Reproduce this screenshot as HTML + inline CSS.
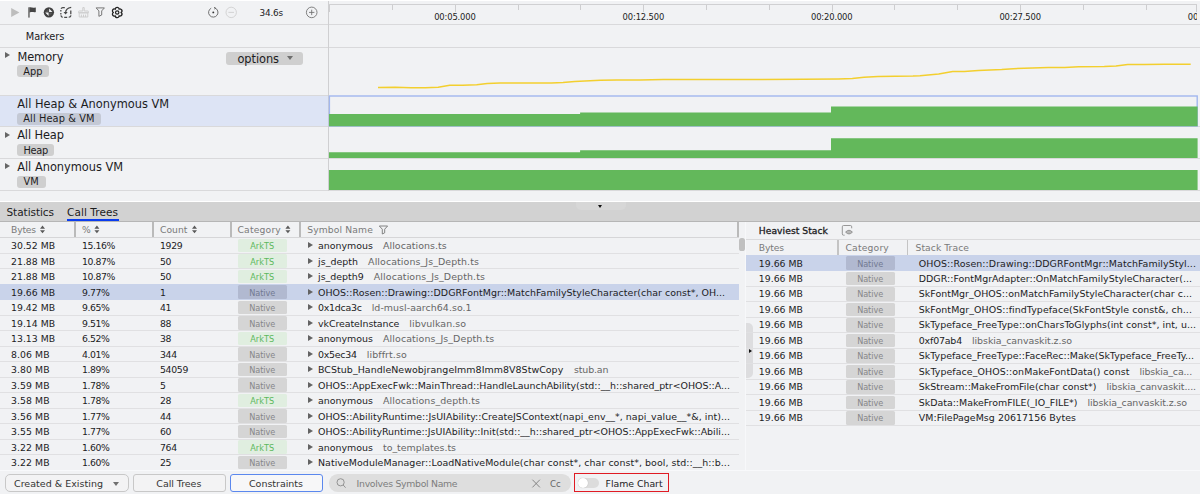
<!DOCTYPE html>
<html><head><meta charset="utf-8"><title>Profiler</title>
<style>
html,body{margin:0;padding:0}
body{width:1200px;height:494px;overflow:hidden;background:#f1f2f4;font-family:"DejaVu Sans","Liberation Sans",sans-serif;color:#1c1c1e;position:relative}
.a{position:absolute}
.t{position:absolute;white-space:pre;line-height:1}
.hl{position:absolute;height:1px;background:#d9d9db}
.vl{position:absolute;width:1px;background:#cfcfd1}
.badge{position:absolute;background:#cfcfcf;border-radius:3px;height:12px}
.arr{position:absolute;width:0;height:0;border-left:5.4px solid #666;border-top:3.6px solid transparent;border-bottom:3.6px solid transparent}
.row{position:absolute;left:0;width:738.5px;height:15.5px}
.cat{position:absolute;height:13.7px;border-radius:1.5px}
.ark{background:#e0eee0;color:#5cb85c}
.nat{background:#d5d5d5;color:#868689}
.g{color:#666}
.ta{position:absolute;left:307.5px;width:0;height:0;border-left:5.2px solid #636363;border-top:3.5px solid transparent;border-bottom:3.5px solid transparent}
.btn{position:absolute;box-sizing:border-box;border:1px solid #c8c8c8;border-radius:3px;background:#f3f3f4}
</style></head><body>

<div class="a" style="left:0;top:0;width:1200px;height:1.2px;background:#fff"></div>
<div class="hl" style="left:0;top:24px;width:1200px"></div>
<div class="hl" style="left:0;top:47px;width:1200px"></div>
<div class="a" style="left:0;top:95px;width:328px;height:31px;background:#dde4f5"></div>
<div class="hl" style="left:0;top:126px;width:1200px"></div>
<div class="hl" style="left:0;top:158px;width:1200px"></div>
<div class="hl" style="left:0;top:190px;width:1200px"></div>
<div class="hl" style="left:0;top:94.5px;width:328px"></div>
<div class="vl" style="left:328px;top:1px;height:190px"></div>
<svg class="a" style="left:0;top:0" width="328" height="25" viewBox="0 0 328 25">
<path d="M11.2 7.9 L19.4 12.4 L11.2 16.9 Z" fill="#bdbdbd"/>
<rect x="28" y="7.3" width="1.9" height="10.3" fill="#858585"/>
<path d="M29.5 7.3 C31 6.9 32.5 7.9 34 7.7 L35.8 7.4 L35.8 12 C34.4 12.6 32.5 11.8 31 12.1 L29.5 12.4 Z" fill="#454545"/>
<circle cx="48.9" cy="12.3" r="5.15" fill="#404040"/>
<path d="M49.1 8.5 L52.5 11.9 L49.1 12.1 Z M48.6 16 L45.2 12.6 L48.6 12.5 Z" fill="#f1f2f4"/>
<path d="M49.2 12.7 L52.4 12.7 L49.2 15.9 Z M48.5 11.9 L45.3 11.9 L48.5 8.7 Z" fill="#585858"/>
<path d="M61.1 8.7 Q61.5 7.6 62.8 7.6 H64.8 M60.85 9.9 V11.5 M60.85 13 V14.4 M60.9 15.4 Q61.2 17.2 62.8 17.25 M64.2 17.25 H67.2 M68.7 17.25 Q70.7 17.1 71 15.4 M70.8 10.5 V14.2" fill="none" stroke="#484848" stroke-width="1.25"/>
<path d="M71.2 7.4 C67.6 8 65.7 9.8 65.6 12.6" fill="none" stroke="#484848" stroke-width="1.15"/>
<path d="M63.5 12 H67.7 L65.6 14.5 Z" fill="#484848"/>
<g fill="none" stroke="#cdcdcd" stroke-width="1">
<path d="M82.8 7.6 h1.4 v3.4 h3.6 q0.6 0 0.6 0.6 v1.2 h-9.8 v-1.2 q0 -0.6 0.6 -0.6 h3.6 z"/>
<path d="M79.2 12.8 h8.6 v4.2 h-8.6 z M81.4 14.6 v2.4 M83.5 14.6 v2.4 M85.6 14.6 v2.4"/>
</g>
<path d="M96.1 7.9 H104.4 L101.7 10.9 V15 L98.9 16.3 V10.9 Z" fill="none" stroke="#777" stroke-width="1" stroke-linejoin="round"/>
<path d="M115.30 9.21A1.70 1.70 0 0 1 119.10 9.21A1.70 1.70 0 0 1 121.00 12.50A1.70 1.70 0 0 1 119.10 15.79A1.70 1.70 0 0 1 115.30 15.79A1.70 1.70 0 0 1 113.40 12.50A1.70 1.70 0 0 1 115.30 9.21Z" fill="none" stroke="#222" stroke-width="1.3" stroke-linejoin="round"/>
<circle cx="117.2" cy="12.5" r="1.7" fill="none" stroke="#222" stroke-width="1.2"/>
<path d="M214.9 8 A4.7 4.7 0 1 1 211.2 8.2" fill="none" stroke="#5a5a5a" stroke-width="0.85"/>
<path d="M214 7.2 L215.6 8.2 L214.2 9.1" fill="none" stroke="#5a5a5a" stroke-width="0.8"/>
<circle cx="213.3" cy="12.4" r="0.95" fill="#333"/>
<circle cx="231.2" cy="12.4" r="5.2" fill="none" stroke="#cbcbcb" stroke-width="0.8"/>
<path d="M228.4 12.4 H234" stroke="#cbcbcb" stroke-width="0.8"/>
<circle cx="311.7" cy="12.4" r="5.3" fill="none" stroke="#6d6d6d" stroke-width="0.85"/>
<path d="M309 12.4 H314.4 M311.7 9.7 V15.1" stroke="#6d6d6d" stroke-width="0.85"/>
</svg>
<div class="t" style="left:259.4px;top:8.80px;font-size:8.9px;letter-spacing:-0.138px">34.6s</div>
<div class="t" style="left:25.8px;top:31.85px;font-size:9.8px;letter-spacing:-0.081px">Markers</div>
<div class="arr" style="left:4.8px;top:52.3px"></div>
<div class="t" style="left:17.4px;top:51.55px;font-size:11.4px;letter-spacing:-0.055px">Memory</div>
<div class="badge" style="left:17px;top:65px;width:31.5px"></div>
<div class="t" style="left:23.3px;top:66.85px;font-size:9.8px;letter-spacing:0.02px">App</div>
<div class="a" style="left:226px;top:52px;width:77px;height:12.5px;background:#cfcfcf;border-radius:3px"></div>
<div class="t" style="left:237.4px;top:53.55px;font-size:11.4px;letter-spacing:-0.05px">options</div>
<div class="a" style="left:287.4px;top:56.3px;width:0;height:0;border-top:4.6px solid #6e6e6e;border-left:3.6px solid transparent;border-right:3.6px solid transparent"></div>
<div class="t" style="left:17.2px;top:98.55px;font-size:11.4px;letter-spacing:-0.003px">All Heap &amp; Anonymous VM</div>
<div class="badge" style="left:17px;top:112.5px;width:84px;background:#c4c9d5"></div>
<div class="t" style="left:23.3px;top:113.85px;font-size:9.8px;letter-spacing:0.1px">All Heap &amp; VM</div>
<div class="arr" style="left:4.8px;top:131.5px"></div>
<div class="t" style="left:17.2px;top:129.55px;font-size:11.4px;letter-spacing:-0.116px">All Heap</div>
<div class="badge" style="left:17px;top:144.4px;width:37px"></div>
<div class="t" style="left:23.5px;top:145.85px;font-size:9.8px;letter-spacing:-0.281px">Heap</div>
<div class="arr" style="left:4.8px;top:163px"></div>
<div class="t" style="left:17.2px;top:161.55px;font-size:11.4px;letter-spacing:-0.01px">All Anonymous VM</div>
<div class="badge" style="left:17px;top:176.2px;width:28.5px"></div>
<div class="t" style="left:23.4px;top:176.85px;font-size:9.8px;letter-spacing:0.222px">VM</div>
<div class="a" style="left:329px;top:4.4px;width:867.8px;height:1px;background:#d0d0d2"></div>
<div class="a" style="left:329.2px;top:5px;width:1.2px;height:7.3px;background:#cdcdcf"></div>
<div class="a" style="left:392.0px;top:5px;width:1px;height:4.5px;background:#cdcdcf"></div>
<div class="a" style="left:454.8px;top:5px;width:1px;height:7.3px;background:#cdcdcf"></div>
<div class="a" style="left:517.6px;top:5px;width:1px;height:4.5px;background:#cdcdcf"></div>
<div class="a" style="left:580.4px;top:5px;width:1px;height:4.5px;background:#cdcdcf"></div>
<div class="a" style="left:643.2px;top:5px;width:1px;height:7.3px;background:#cdcdcf"></div>
<div class="a" style="left:706.0px;top:5px;width:1px;height:4.5px;background:#cdcdcf"></div>
<div class="a" style="left:768.8px;top:5px;width:1px;height:4.5px;background:#cdcdcf"></div>
<div class="a" style="left:831.6px;top:5px;width:1px;height:7.3px;background:#cdcdcf"></div>
<div class="a" style="left:894.4px;top:5px;width:1px;height:4.5px;background:#cdcdcf"></div>
<div class="a" style="left:957.2px;top:5px;width:1px;height:4.5px;background:#cdcdcf"></div>
<div class="a" style="left:1020.0px;top:5px;width:1px;height:7.3px;background:#cdcdcf"></div>
<div class="a" style="left:1082.8px;top:5px;width:1px;height:4.5px;background:#cdcdcf"></div>
<div class="a" style="left:1145.6px;top:5px;width:1px;height:4.5px;background:#cdcdcf"></div>
<div class="a" style="left:1195.8px;top:5px;width:1px;height:7.3px;background:#cdcdcf"></div>
<div class="a" style="left:329px;top:0;width:868.3px;height:24px;overflow:hidden">
<div class="t" style="left:105.2px;top:13.05px;font-size:8.4px;letter-spacing:-0.144px;color:#222">00:05.000</div>
<div class="t" style="left:293.6px;top:13.05px;font-size:8.4px;letter-spacing:-0.144px;color:#222">00:12.500</div>
<div class="t" style="left:482.0px;top:13.05px;font-size:8.4px;letter-spacing:-0.144px;color:#222">00:20.000</div>
<div class="t" style="left:670.4px;top:13.05px;font-size:8.4px;letter-spacing:-0.144px;color:#222">00:27.500</div>
<div class="t" style="left:858.8px;top:13.05px;font-size:8.4px;letter-spacing:-0.144px;color:#222">00:35.000</div>
</div>
<svg class="a" style="left:0;top:0" width="1200" height="200" viewBox="0 0 1200 200">
<rect x="329.4" y="96" width="867.8" height="30" fill="none" stroke="#a2b7ee" stroke-width="1.4"/>
<path d="M329 114 H580.1 V112.6 H831 V106.4 H1197.6 V126.2 H329 Z" fill="#63b85b"/>
<path d="M329 152.3 H580.1 V150.3 H831 V138.2 H1197.6 V158 H329 Z" fill="#63b85b"/>
<path d="M329 169.9 H1197.6 V189.9 H329 Z" fill="#63b85b"/>
<polyline points="378,87.5 395,87.3 411.3,87.8 425.3,87.8 438.2,87.3 449.8,85.2 462.7,85.2 476.7,84.7 487.2,83.6 500,82.9 511.7,83.1 537.3,83.1 551.3,82.9 563,82.4 574.7,81.5 600.3,80.3 616.7,80.1 640,79.9 663.3,79.6 752,79.6 803.3,79.2 838.3,78.9 852.3,78.5 864,77.3 878,76.4 913,76.1 920,75.7 938.7,74.1 952.7,71.5 964.3,71.5 978.3,70.6 1001.7,69.6 1013.3,68.7 1048.3,67.5 1064.7,67.5 1078.7,66.8 1104.3,66.6 1116,65.9 1127.7,64.5 1144,64.5 1165,64.3 1190.7,64.3" fill="none" stroke="#f3cf2e" stroke-width="1.5" stroke-linejoin="round"/>
</svg>
<div class="a" style="left:0;top:201.2px;width:1200px;height:1.3px;background:#fff"></div>
<div class="a" style="left:0;top:202.4px;width:1200px;height:19px;background:#d2d2d2"></div>
<div class="a" style="left:0;top:220.6px;width:1200px;height:1px;background:#b6b6b6"></div>
<div class="a" style="left:575.6px;top:202.4px;width:50.6px;height:7.3px;background:#d7d7d7;border-radius:0 0 5px 5px"></div>
<div class="t" style="left:6.5px;top:207.00px;font-size:10.5px;letter-spacing:-0.05px">Statistics</div>
<div class="t" style="left:67px;top:207.00px;font-size:10.5px;letter-spacing:0.07px">Call Trees</div>
<div class="a" style="left:67px;top:219.4px;width:51.5px;height:2.1px;background:#0a3cf0"></div>
<div class="a" style="left:597.7px;top:204.8px;width:0;height:0;border-top:3.2px solid #111;border-left:2.8px solid transparent;border-right:2.8px solid transparent"></div>
<div class="a" style="left:0;top:221.6px;width:1200px;height:15.6px;background:#f1f2f4"></div>
<div class="hl" style="left:0;top:237px;width:738.5px;background:#d6d6d8"></div>
<div class="a" style="left:73.8px;top:222px;width:1.8px;height:15px;background:#bababa"></div>
<div class="a" style="left:151.8px;top:222px;width:1.8px;height:15px;background:#bababa"></div>
<div class="a" style="left:229.8px;top:222px;width:1.8px;height:15px;background:#bababa"></div>
<div class="a" style="left:298.8px;top:222px;width:1.8px;height:15px;background:#bababa"></div>
<div class="a" style="left:736.8px;top:222px;width:1.8px;height:15px;background:#bababa"></div>
<div class="t" style="left:11px;top:225.15px;font-size:9.2px;letter-spacing:-0.159px;color:#7a7a7a">Bytes</div>
<div class="t" style="left:82px;top:225.15px;font-size:9.2px;letter-spacing:-0.134px;color:#7a7a7a">%</div>
<div class="t" style="left:160px;top:225.15px;font-size:9.2px;letter-spacing:0.041px;color:#7a7a7a">Count</div>
<div class="t" style="left:237.5px;top:225.15px;font-size:9.2px;letter-spacing:0.191px;color:#7a7a7a">Category</div>
<div class="t" style="left:307.2px;top:225.15px;font-size:9.2px;letter-spacing:0.141px;color:#7a7a7a">Symbol Name</div>
<svg class="a" style="left:0;top:0" width="760" height="240" viewBox="0 0 760 240"><path d="M40 228.7 L42.5 225.5 L45 228.7 Z M40 230.3 L42.5 233.3 L45 230.3 Z" fill="#5a5a5a"/><path d="M94.4 228.7 L96.9 225.5 L99.4 228.7 Z M94.4 230.3 L96.9 233.3 L99.4 230.3 Z" fill="#5a5a5a"/><path d="M192 228.7 L194.5 225.5 L197 228.7 Z M192 230.3 L194.5 233.3 L197 230.3 Z" fill="#5a5a5a"/><path d="M285.4 228.7 L287.9 225.5 L290.4 228.7 Z M285.4 230.3 L287.9 233.3 L290.4 230.3 Z" fill="#5a5a5a"/><path d="M379.3 226 H387.6 L384.7 229.2 V232.8 L382.3 234 V229.2 Z" fill="none" stroke="#777" stroke-width="0.9" stroke-linejoin="round"/></svg>
<div class="row" style="top:237.70px;"></div>
<div class="t" style="left:11px;top:241.10px;font-size:9.3px;letter-spacing:0.027px">30.52 MB</div><div class="t" style="left:82px;top:241.10px;font-size:9.3px;letter-spacing:-0.409px">15.16%</div><div class="t" style="left:160px;top:241.10px;font-size:9.3px;letter-spacing:-0.318px">1929</div>
<div class="cat ark" style="left:237.6px;top:238.70px;width:49.3px"></div><div class="t" style="left:250.25px;top:242.18px;font-size:8.15px;letter-spacing:0.053px;color:#5cb85c">ArkTS</div>
<div class="ta" style="top:242.40px"></div>
<div class="t" style="left:318px;top:241.03px;font-size:9.45px;letter-spacing:0.002px">anonymous</div>
<div class="t g" style="left:383px;top:241.03px;font-size:9.45px;letter-spacing:0.046px">Allocations.ts</div>
<div class="hl" style="left:0;top:252.70px;width:738.5px;background:#e0e0e2"></div>
<div class="row" style="top:253.20px;"></div>
<div class="t" style="left:11px;top:257.10px;font-size:9.3px;letter-spacing:0.027px">21.88 MB</div><div class="t" style="left:82px;top:257.10px;font-size:9.3px;letter-spacing:-0.409px">10.87%</div><div class="t" style="left:160px;top:257.10px;font-size:9.3px;letter-spacing:-0.322px">50</div>
<div class="cat ark" style="left:237.6px;top:254.20px;width:49.3px"></div><div class="t" style="left:250.25px;top:258.18px;font-size:8.15px;letter-spacing:0.053px;color:#5cb85c">ArkTS</div>
<div class="ta" style="top:257.90px"></div>
<div class="t" style="left:318px;top:257.02px;font-size:9.45px;letter-spacing:0.046px">js_depth</div>
<div class="t g" style="left:368.1px;top:257.02px;font-size:9.45px;letter-spacing:0.085px">Allocations_Js_Depth.ts</div>
<div class="hl" style="left:0;top:268.20px;width:738.5px;background:#e0e0e2"></div>
<div class="row" style="top:268.70px;"></div>
<div class="t" style="left:11px;top:272.10px;font-size:9.3px;letter-spacing:0.027px">21.88 MB</div><div class="t" style="left:82px;top:272.10px;font-size:9.3px;letter-spacing:-0.409px">10.87%</div><div class="t" style="left:160px;top:272.10px;font-size:9.3px;letter-spacing:-0.322px">50</div>
<div class="cat ark" style="left:237.6px;top:269.70px;width:49.3px"></div><div class="t" style="left:250.25px;top:273.18px;font-size:8.15px;letter-spacing:0.053px;color:#5cb85c">ArkTS</div>
<div class="ta" style="top:273.40px"></div>
<div class="t" style="left:318px;top:272.02px;font-size:9.45px;letter-spacing:0.007px">js_depth9</div>
<div class="t g" style="left:373.8px;top:272.02px;font-size:9.45px;letter-spacing:0.098px">Allocations_Js_Depth.ts</div>
<div class="hl" style="left:0;top:283.70px;width:738.5px;background:#e0e0e2"></div>
<div class="row" style="top:284.20px;background:#c9d3ea;"></div>
<div class="t" style="left:11px;top:288.10px;font-size:9.3px;letter-spacing:0.027px">19.66 MB</div><div class="t" style="left:82px;top:288.10px;font-size:9.3px;letter-spacing:-0.429px">9.77%</div><div class="t" style="left:160px;top:288.10px;font-size:9.3px;letter-spacing:-0.322px">1</div>
<div class="cat nat" style="left:237.6px;top:285.20px;width:49.3px;background:#b1b9d0"></div><div class="t" style="left:249.25px;top:289.18px;font-size:8.15px;letter-spacing:-0.052px;color:#717a92">Native</div>
<div class="ta" style="top:288.90px"></div>
<div class="t" style="left:318px;top:288.02px;font-size:9.45px;letter-spacing:0.03px">OHOS::Rosen::Drawing::DDGRFontMgr::MatchFamilyStyleCharacter(char const*, OH...</div>
<div class="row" style="top:299.70px;"></div>
<div class="t" style="left:11px;top:303.10px;font-size:9.3px;letter-spacing:0.027px">19.42 MB</div><div class="t" style="left:82px;top:303.10px;font-size:9.3px;letter-spacing:-0.429px">9.65%</div><div class="t" style="left:160px;top:303.10px;font-size:9.3px;letter-spacing:-0.322px">41</div>
<div class="cat nat" style="left:237.6px;top:300.70px;width:49.3px"></div><div class="t" style="left:249.25px;top:304.18px;font-size:8.15px;letter-spacing:-0.052px;color:#868689">Native</div>
<div class="ta" style="top:304.40px"></div>
<div class="t" style="left:318px;top:303.02px;font-size:9.45px;letter-spacing:-0.256px">0x1dca3c</div>
<div class="t g" style="left:371.7px;top:303.02px;font-size:9.45px;letter-spacing:0.045px">ld-musl-aarch64.so.1</div>
<div class="hl" style="left:0;top:314.70px;width:738.5px;background:#e0e0e2"></div>
<div class="row" style="top:315.20px;"></div>
<div class="t" style="left:11px;top:319.10px;font-size:9.3px;letter-spacing:0.027px">19.14 MB</div><div class="t" style="left:82px;top:319.10px;font-size:9.3px;letter-spacing:-0.429px">9.51%</div><div class="t" style="left:160px;top:319.10px;font-size:9.3px;letter-spacing:-0.322px">88</div>
<div class="cat nat" style="left:237.6px;top:316.20px;width:49.3px"></div><div class="t" style="left:249.25px;top:320.18px;font-size:8.15px;letter-spacing:-0.052px;color:#868689">Native</div>
<div class="ta" style="top:319.90px"></div>
<div class="t" style="left:318px;top:319.02px;font-size:9.45px;letter-spacing:-0.079px">vkCreateInstance</div>
<div class="t g" style="left:409.3px;top:319.02px;font-size:9.45px;letter-spacing:0.043px">libvulkan.so</div>
<div class="hl" style="left:0;top:330.20px;width:738.5px;background:#e0e0e2"></div>
<div class="row" style="top:330.70px;"></div>
<div class="t" style="left:11px;top:334.10px;font-size:9.3px;letter-spacing:0.027px">13.13 MB</div><div class="t" style="left:82px;top:334.10px;font-size:9.3px;letter-spacing:-0.429px">6.52%</div><div class="t" style="left:160px;top:334.10px;font-size:9.3px;letter-spacing:-0.322px">38</div>
<div class="cat ark" style="left:237.6px;top:331.70px;width:49.3px"></div><div class="t" style="left:250.25px;top:335.18px;font-size:8.15px;letter-spacing:0.053px;color:#5cb85c">ArkTS</div>
<div class="ta" style="top:335.40px"></div>
<div class="t" style="left:318px;top:334.02px;font-size:9.45px;letter-spacing:0.002px">anonymous</div>
<div class="t g" style="left:383px;top:334.02px;font-size:9.45px;letter-spacing:0.102px">Allocations_Js_Depth.ts</div>
<div class="hl" style="left:0;top:345.70px;width:738.5px;background:#e0e0e2"></div>
<div class="row" style="top:346.20px;"></div>
<div class="t" style="left:11px;top:350.10px;font-size:9.3px;letter-spacing:0.077px">8.06 MB</div><div class="t" style="left:82px;top:350.10px;font-size:9.3px;letter-spacing:-0.429px">4.01%</div><div class="t" style="left:160px;top:350.10px;font-size:9.3px;letter-spacing:-0.317px">344</div>
<div class="cat nat" style="left:237.6px;top:347.20px;width:49.3px"></div><div class="t" style="left:249.25px;top:351.18px;font-size:8.15px;letter-spacing:-0.052px;color:#868689">Native</div>
<div class="ta" style="top:350.90px"></div>
<div class="t" style="left:318px;top:350.02px;font-size:9.45px;letter-spacing:-0.273px">0x5ec34</div>
<div class="t g" style="left:366.7px;top:350.02px;font-size:9.45px;letter-spacing:0.098px">libffrt.so</div>
<div class="hl" style="left:0;top:361.20px;width:738.5px;background:#e0e0e2"></div>
<div class="row" style="top:361.70px;"></div>
<div class="t" style="left:11px;top:365.10px;font-size:9.3px;letter-spacing:0.077px">3.80 MB</div><div class="t" style="left:82px;top:365.10px;font-size:9.3px;letter-spacing:-0.429px">1.89%</div><div class="t" style="left:160px;top:365.10px;font-size:9.3px;letter-spacing:-0.316px">54059</div>
<div class="cat nat" style="left:237.6px;top:362.70px;width:49.3px"></div><div class="t" style="left:249.25px;top:366.18px;font-size:8.15px;letter-spacing:-0.052px;color:#868689">Native</div>
<div class="ta" style="top:366.40px"></div>
<div class="t" style="left:318px;top:365.02px;font-size:9.45px;letter-spacing:0.053px">BCStub_HandleNewobjrangeImm8Imm8V8StwCopy</div>
<div class="t g" style="left:574px;top:365.02px;font-size:9.45px;letter-spacing:-0.151px">stub.an</div>
<div class="hl" style="left:0;top:376.70px;width:738.5px;background:#e0e0e2"></div>
<div class="row" style="top:377.20px;"></div>
<div class="t" style="left:11px;top:381.10px;font-size:9.3px;letter-spacing:0.077px">3.59 MB</div><div class="t" style="left:82px;top:381.10px;font-size:9.3px;letter-spacing:-0.429px">1.78%</div><div class="t" style="left:160px;top:381.10px;font-size:9.3px;letter-spacing:-0.322px">5</div>
<div class="cat nat" style="left:237.6px;top:378.20px;width:49.3px"></div><div class="t" style="left:249.25px;top:382.18px;font-size:8.15px;letter-spacing:-0.052px;color:#868689">Native</div>
<div class="ta" style="top:381.90px"></div>
<div class="t" style="left:318px;top:381.02px;font-size:9.45px;letter-spacing:-0.016px">OHOS::AppExecFwk::MainThread::HandleLaunchAbility(std::__h::shared_ptr&lt;OHOS::A...</div>
<div class="hl" style="left:0;top:392.20px;width:738.5px;background:#e0e0e2"></div>
<div class="row" style="top:392.70px;"></div>
<div class="t" style="left:11px;top:396.10px;font-size:9.3px;letter-spacing:0.077px">3.58 MB</div><div class="t" style="left:82px;top:396.10px;font-size:9.3px;letter-spacing:-0.429px">1.78%</div><div class="t" style="left:160px;top:396.10px;font-size:9.3px;letter-spacing:-0.322px">28</div>
<div class="cat ark" style="left:237.6px;top:393.70px;width:49.3px"></div><div class="t" style="left:250.25px;top:397.18px;font-size:8.15px;letter-spacing:0.053px;color:#5cb85c">ArkTS</div>
<div class="ta" style="top:397.40px"></div>
<div class="t" style="left:318px;top:396.02px;font-size:9.45px;letter-spacing:0.002px">anonymous</div>
<div class="t g" style="left:383px;top:396.02px;font-size:9.45px;letter-spacing:0.087px">Allocations_depth.ts</div>
<div class="hl" style="left:0;top:407.70px;width:738.5px;background:#e0e0e2"></div>
<div class="row" style="top:408.20px;"></div>
<div class="t" style="left:11px;top:412.10px;font-size:9.3px;letter-spacing:0.077px">3.56 MB</div><div class="t" style="left:82px;top:412.10px;font-size:9.3px;letter-spacing:-0.429px">1.77%</div><div class="t" style="left:160px;top:412.10px;font-size:9.3px;letter-spacing:-0.322px">44</div>
<div class="cat nat" style="left:237.6px;top:409.20px;width:49.3px"></div><div class="t" style="left:249.25px;top:413.18px;font-size:8.15px;letter-spacing:-0.052px;color:#868689">Native</div>
<div class="ta" style="top:412.90px"></div>
<div class="t" style="left:318px;top:412.02px;font-size:9.45px;letter-spacing:0.033px">OHOS::AbilityRuntime::JsUIAbility::CreateJSContext(napi_env__*, napi_value__*&amp;, int)...</div>
<div class="hl" style="left:0;top:423.20px;width:738.5px;background:#e0e0e2"></div>
<div class="row" style="top:423.70px;"></div>
<div class="t" style="left:11px;top:427.10px;font-size:9.3px;letter-spacing:0.077px">3.55 MB</div><div class="t" style="left:82px;top:427.10px;font-size:9.3px;letter-spacing:-0.429px">1.77%</div><div class="t" style="left:160px;top:427.10px;font-size:9.3px;letter-spacing:-0.322px">60</div>
<div class="cat nat" style="left:237.6px;top:424.70px;width:49.3px"></div><div class="t" style="left:249.25px;top:428.18px;font-size:8.15px;letter-spacing:-0.052px;color:#868689">Native</div>
<div class="ta" style="top:428.40px"></div>
<div class="t" style="left:318px;top:427.02px;font-size:9.45px;letter-spacing:0.006px">OHOS::AbilityRuntime::JsUIAbility::Init(std::__h::shared_ptr&lt;OHOS::AppExecFwk::Abili...</div>
<div class="hl" style="left:0;top:438.70px;width:738.5px;background:#e0e0e2"></div>
<div class="row" style="top:439.20px;"></div>
<div class="t" style="left:11px;top:443.10px;font-size:9.3px;letter-spacing:0.077px">3.22 MB</div><div class="t" style="left:82px;top:443.10px;font-size:9.3px;letter-spacing:-0.429px">1.60%</div><div class="t" style="left:160px;top:443.10px;font-size:9.3px;letter-spacing:-0.317px">764</div>
<div class="cat ark" style="left:237.6px;top:440.20px;width:49.3px"></div><div class="t" style="left:250.25px;top:444.18px;font-size:8.15px;letter-spacing:0.053px;color:#5cb85c">ArkTS</div>
<div class="ta" style="top:443.90px"></div>
<div class="t" style="left:318px;top:443.02px;font-size:9.45px;letter-spacing:0.002px">anonymous</div>
<div class="t g" style="left:383px;top:443.02px;font-size:9.45px;letter-spacing:-0.023px">to_templates.ts</div>
<div class="hl" style="left:0;top:454.20px;width:738.5px;background:#e0e0e2"></div>
<div class="row" style="top:454.70px;"></div>
<div class="t" style="left:11px;top:458.10px;font-size:9.3px;letter-spacing:0.077px">3.22 MB</div><div class="t" style="left:82px;top:458.10px;font-size:9.3px;letter-spacing:-0.429px">1.60%</div><div class="t" style="left:160px;top:458.10px;font-size:9.3px;letter-spacing:-0.322px">25</div>
<div class="cat nat" style="left:237.6px;top:455.70px;width:49.3px"></div><div class="t" style="left:249.25px;top:459.18px;font-size:8.15px;letter-spacing:-0.052px;color:#868689">Native</div>
<div class="ta" style="top:459.40px"></div>
<div class="t" style="left:318px;top:458.02px;font-size:9.45px;letter-spacing:0.05px">NativeModuleManager::LoadNativeModule(char const*, char const*, bool, std::__h::b...</div>
<div class="a" style="left:739.4px;top:238px;width:5.3px;height:12.6px;background:#c0c0c0;border-radius:2.6px"></div>
<div class="a" style="left:746.3px;top:323.3px;width:7.2px;height:54.7px;background:#dddddf;border-radius:0 5px 5px 0"></div>
<div class="a" style="left:749.2px;top:348.6px;width:0;height:0;border-left:3.1px solid #111;border-top:2.9px solid transparent;border-bottom:2.9px solid transparent"></div>
<div class="t" style="left:758.8px;top:226.15px;font-size:9.2px;letter-spacing:0.043px;-webkit-text-stroke:.3px #1c1c1e">Heaviest Stack</div>
<svg class="a" style="left:835px;top:220px" width="25" height="20" viewBox="835 220 25 20">
<path d="M844.6 235.2 H843.6 Q842.3 235.2 842.3 233.9 V226.8 Q842.3 225.5 843.6 225.5 H850.4 Q851.7 225.5 851.7 226.8 V228.3" fill="none" stroke="#8c8c8c" stroke-width="0.9"/>
<path d="M845.6 232.1 Q849 228.4 852.4 232.1 Q849 235.8 845.6 232.1 Z" fill="#b8b8b8" stroke="#8c8c8c" stroke-width="0.9"/>
</svg>
<div class="hl" style="left:746.3px;top:238.7px;width:454px;background:#dadadc"></div>
<div class="t" style="left:758.8px;top:243.15px;font-size:9.2px;letter-spacing:-0.159px;color:#7a7a7a">Bytes</div>
<div class="t" style="left:845.5px;top:243.15px;font-size:9.2px;letter-spacing:0.191px;color:#7a7a7a">Category</div>
<div class="t" style="left:915.5px;top:243.15px;font-size:9.2px;letter-spacing:0.07px;color:#7a7a7a">Stack Trace</div>
<div class="a" style="left:837.2px;top:239.7px;width:1.5px;height:15.3px;background:#c4c4c4"></div>
<div class="a" style="left:906.7px;top:239.7px;width:1.5px;height:15.3px;background:#c4c4c4"></div>
<div class="row" style="left:746.3px;width:454px;top:255.20px;height:15.48px;background:#c9d3ea;"></div>
<div class="t" style="left:758.8px;top:259.10px;font-size:9.3px;letter-spacing:0.027px">19.66 MB</div>
<div class="cat nat" style="left:845.5px;top:256.20px;width:49.3px;background:#b1b9d0"></div><div class="t" style="left:857.15px;top:260.18px;font-size:8.15px;letter-spacing:-0.052px;color:#717a92">Native</div>
<div class="t" style="left:918.8px;top:259.02px;font-size:9.45px;letter-spacing:0.058px">OHOS::Rosen::Drawing::DDGRFontMgr::MatchFamilyStyl...</div>
<div class="row" style="left:746.3px;width:454px;top:270.68px;height:15.48px;"></div>
<div class="t" style="left:758.8px;top:274.10px;font-size:9.3px;letter-spacing:0.027px">19.66 MB</div>
<div class="cat nat" style="left:845.5px;top:271.68px;width:49.3px"></div><div class="t" style="left:857.15px;top:275.18px;font-size:8.15px;letter-spacing:-0.052px;color:#868689">Native</div>
<div class="t" style="left:918.8px;top:274.02px;font-size:9.45px;letter-spacing:0.018px">DDGR::FontMgrAdapter::OnMatchFamilyStyleCharacter(...</div>
<div class="hl" style="left:746.3px;top:285.66px;width:454px;background:#e0e0e2"></div>
<div class="row" style="left:746.3px;width:454px;top:286.16px;height:15.48px;"></div>
<div class="t" style="left:758.8px;top:289.10px;font-size:9.3px;letter-spacing:0.027px">19.66 MB</div>
<div class="cat nat" style="left:845.5px;top:287.16px;width:49.3px"></div><div class="t" style="left:857.15px;top:290.18px;font-size:8.15px;letter-spacing:-0.052px;color:#868689">Native</div>
<div class="t" style="left:918.8px;top:289.02px;font-size:9.45px;letter-spacing:0.023px">SkFontMgr_OHOS::onMatchFamilyStyleCharacter(char c...</div>
<div class="hl" style="left:746.3px;top:301.14px;width:454px;background:#e0e0e2"></div>
<div class="row" style="left:746.3px;width:454px;top:301.64px;height:15.48px;"></div>
<div class="t" style="left:758.8px;top:305.10px;font-size:9.3px;letter-spacing:0.027px">19.66 MB</div>
<div class="cat nat" style="left:845.5px;top:302.64px;width:49.3px"></div><div class="t" style="left:857.15px;top:306.18px;font-size:8.15px;letter-spacing:-0.052px;color:#868689">Native</div>
<div class="t" style="left:918.8px;top:305.02px;font-size:9.45px;letter-spacing:0.055px">SkFontMgr_OHOS::findTypeface(SkFontStyle const&amp;, ch...</div>
<div class="hl" style="left:746.3px;top:316.62px;width:454px;background:#e0e0e2"></div>
<div class="row" style="left:746.3px;width:454px;top:317.12px;height:15.48px;"></div>
<div class="t" style="left:758.8px;top:320.10px;font-size:9.3px;letter-spacing:0.027px">19.66 MB</div>
<div class="cat nat" style="left:845.5px;top:318.12px;width:49.3px"></div><div class="t" style="left:857.15px;top:321.18px;font-size:8.15px;letter-spacing:-0.052px;color:#868689">Native</div>
<div class="t" style="left:918.8px;top:320.02px;font-size:9.45px;letter-spacing:0.024px">SkTypeface_FreeType::onCharsToGlyphs(int const*, int, u...</div>
<div class="hl" style="left:746.3px;top:332.10px;width:454px;background:#e0e0e2"></div>
<div class="row" style="left:746.3px;width:454px;top:332.60px;height:15.48px;"></div>
<div class="t" style="left:758.8px;top:336.10px;font-size:9.3px;letter-spacing:0.027px">19.66 MB</div>
<div class="cat nat" style="left:845.5px;top:333.60px;width:49.3px"></div><div class="t" style="left:857.15px;top:337.18px;font-size:8.15px;letter-spacing:-0.052px;color:#868689">Native</div>
<div class="t" style="left:918.8px;top:336.02px;font-size:9.45px;letter-spacing:-0.188px">0xf07ab4</div>
<div class="t g" style="left:972px;top:336.02px;font-size:9.45px;letter-spacing:-0.065px">libskia_canvaskit.z.so</div>
<div class="hl" style="left:746.3px;top:347.58px;width:454px;background:#e0e0e2"></div>
<div class="row" style="left:746.3px;width:454px;top:348.08px;height:15.48px;"></div>
<div class="t" style="left:758.8px;top:351.10px;font-size:9.3px;letter-spacing:0.027px">19.66 MB</div>
<div class="cat nat" style="left:845.5px;top:349.08px;width:49.3px"></div><div class="t" style="left:857.15px;top:352.18px;font-size:8.15px;letter-spacing:-0.052px;color:#868689">Native</div>
<div class="t" style="left:918.8px;top:351.02px;font-size:9.45px;letter-spacing:0.006px">SkTypeface_FreeType::FaceRec::Make(SkTypeface_FreeTy...</div>
<div class="hl" style="left:746.3px;top:363.06px;width:454px;background:#e0e0e2"></div>
<div class="row" style="left:746.3px;width:454px;top:363.56px;height:15.48px;"></div>
<div class="t" style="left:758.8px;top:367.10px;font-size:9.3px;letter-spacing:0.027px">19.66 MB</div>
<div class="cat nat" style="left:845.5px;top:364.56px;width:49.3px"></div><div class="t" style="left:857.15px;top:368.18px;font-size:8.15px;letter-spacing:-0.052px;color:#868689">Native</div>
<div class="t" style="left:918.8px;top:367.02px;font-size:9.45px;letter-spacing:0.072px">SkTypeface_OHOS::onMakeFontData() const</div>
<div class="t g" style="left:1139.5px;top:367.02px;font-size:9.45px;letter-spacing:-0.171px">libskia_ca...</div>
<div class="hl" style="left:746.3px;top:378.54px;width:454px;background:#e0e0e2"></div>
<div class="row" style="left:746.3px;width:454px;top:379.04px;height:15.48px;"></div>
<div class="t" style="left:758.8px;top:382.10px;font-size:9.3px;letter-spacing:0.027px">19.66 MB</div>
<div class="cat nat" style="left:845.5px;top:380.04px;width:49.3px"></div><div class="t" style="left:857.15px;top:383.18px;font-size:8.15px;letter-spacing:-0.052px;color:#868689">Native</div>
<div class="t" style="left:918.8px;top:382.02px;font-size:9.45px;letter-spacing:0.006px">SkStream::MakeFromFile(char const*)</div>
<div class="t g" style="left:1106.5px;top:382.02px;font-size:9.45px;letter-spacing:-0.109px">libskia_canvaskit....</div>
<div class="hl" style="left:746.3px;top:394.02px;width:454px;background:#e0e0e2"></div>
<div class="row" style="left:746.3px;width:454px;top:394.52px;height:15.48px;"></div>
<div class="t" style="left:758.8px;top:398.10px;font-size:9.3px;letter-spacing:0.027px">19.66 MB</div>
<div class="cat nat" style="left:845.5px;top:395.52px;width:49.3px"></div><div class="t" style="left:857.15px;top:399.18px;font-size:8.15px;letter-spacing:-0.052px;color:#868689">Native</div>
<div class="t" style="left:918.8px;top:398.02px;font-size:9.45px;letter-spacing:-0.016px">SkData::MakeFromFILE(_IO_FILE*)</div>
<div class="t g" style="left:1087.5px;top:398.02px;font-size:9.45px;letter-spacing:-0.087px">libskia_canvaskit.z.so</div>
<div class="hl" style="left:746.3px;top:409.50px;width:454px;background:#e0e0e2"></div>
<div class="row" style="left:746.3px;width:454px;top:410.00px;height:15.48px;"></div>
<div class="t" style="left:758.8px;top:413.10px;font-size:9.3px;letter-spacing:0.027px">19.66 MB</div>
<div class="cat nat" style="left:845.5px;top:411.00px;width:49.3px"></div><div class="t" style="left:857.15px;top:414.18px;font-size:8.15px;letter-spacing:-0.052px;color:#868689">Native</div>
<div class="t" style="left:918.8px;top:413.02px;font-size:9.45px;letter-spacing:0.041px">VM:FilePageMsg 20617156 Bytes</div>
<div class="hl" style="left:746.3px;top:424.98px;width:454px;background:#e0e0e2"></div>
<div class="a" style="left:745px;top:221.8px;width:1.3px;height:249px;background:#f7f8fa"></div>
<div class="a" style="left:0;top:470.2px;width:1200px;height:24px;background:#f1f2f4"></div><div class="a" style="left:0;top:470.2px;width:1200px;height:1.2px;background:#f8f9fb"></div>
<div class="btn" style="left:5px;top:474px;width:123.5px;height:18.2px;border-radius:5px"></div>
<div class="t" style="left:14px;top:479.00px;font-size:9.5px;letter-spacing:0.017px;color:#333">Created &amp; Existing</div>
<div class="a" style="left:113.3px;top:481.6px;width:0;height:0;border-top:4.4px solid #707070;border-left:3.1px solid transparent;border-right:3.1px solid transparent"></div>
<div class="btn" style="left:132.5px;top:474px;width:93.2px;height:18.2px"></div>
<div class="t" style="left:156.3px;top:479.00px;font-size:9.5px;letter-spacing:-0.05px;color:#333">Call Trees</div>
<div class="btn" style="left:229.7px;top:474px;width:93.2px;height:18.2px;border:1.3px solid #5b88ee;background:#f7f7f8"></div>
<div class="t" style="left:249px;top:479.00px;font-size:9.5px;letter-spacing:-0.018px;color:#333">Constraints</div>
<div class="a" style="left:329px;top:474px;width:241.6px;height:17.6px;background:#dedede;border-radius:8.8px"></div>
<div class="t" style="left:356.6px;top:479.10px;font-size:9.3px;letter-spacing:-0.288px;color:#7d7d7d">Involves Symbol Name</div>
<div class="t" style="left:550px;top:479.95px;font-size:8.6px;letter-spacing:-0.067px;color:#666">Cc</div>
<svg class="a" style="left:330px;top:472px" width="240" height="22" viewBox="330 472 240 22">
<circle cx="340.6" cy="482.3" r="3.6" fill="none" stroke="#8a8a8a" stroke-width="0.9"/>
<path d="M343.2 485 L345.6 487.7" stroke="#8a8a8a" stroke-width="0.9"/>
<path d="M532.4 479.7 L539.9 487.4 M539.9 479.7 L532.4 487.4" stroke="#777" stroke-width="0.85"/>
</svg>
<div class="a" style="left:574.3px;top:472.5px;width:94.5px;height:19.2px;box-sizing:border-box;border:1.8px solid #e01b24"></div>
<div class="a" style="left:577.7px;top:477.7px;width:21px;height:10.7px;background:#dcdcdc;border-radius:5.4px"></div>
<div class="a" style="left:578.1px;top:478px;width:10.1px;height:10.1px;background:#fff;border-radius:5.1px;box-shadow:0 0 1px rgba(0,0,0,.25)"></div>
<div class="t" style="left:605.6px;top:479.07px;font-size:9.35px;letter-spacing:-0.018px">Flame Chart</div>
</body></html>
